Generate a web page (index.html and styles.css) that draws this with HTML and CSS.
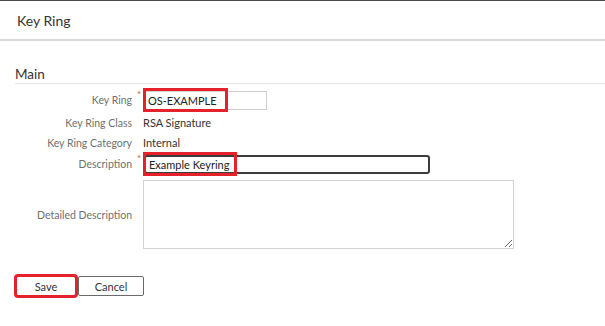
FILE: index.html
```html
<!DOCTYPE html>
<html lang="en">
<head>
    <meta charset="UTF-8">
    <title>Key Ring</title>
    <link rel="stylesheet" href="styles.css">
</head>
<body>
    <div class="page">
        <div class="page-header">
            <h1>Key Ring</h1>
        </div>
        <div class="section">
            <h2>Main</h2>
            <div class="form">
                <div class="row row-input">
                    <label>Key Ring</label>
                    <span class="req">*</span>
                    <div class="field">
                        <input class="txt txt-short" type="text" value="OS-EXAMPLE">
                        <span class="mark mark-keyring"></span>
                    </div>
                </div>
                <div class="row">
                    <label>Key Ring Class</label>
                    <span></span>
                    <div class="value">RSA Signature</div>
                </div>
                <div class="row row-small">
                    <label>Key Ring Category</label>
                    <span></span>
                    <div class="value">Internal</div>
                </div>
                <div class="row row-input">
                    <label>Description</label>
                    <span class="req">*</span>
                    <div class="field">
                        <input class="txt txt-long" type="text" value="Example Keyring">
                        <span class="mark mark-desc"></span>
                    </div>
                </div>
                <div class="row row-area">
                    <label>Detailed Description</label>
                    <span></span>
                    <div class="field">
                        <textarea class="area"></textarea>
                    </div>
                </div>
            </div>
        </div>
        <div class="actions">
            <button class="btn btn-save">Save</button>
            <button class="btn">Cancel</button>
        </div>
    </div>
</body>
</html>
```

FILE: styles.css
```css
* {
    margin: 0;
    padding: 0;
    box-sizing: border-box;
    font-family: Lato, "Open Sans", sans-serif;
}

body {
    background-color: #ffffff;
    color: #333333;
}

.page {
    width: 605px;
    height: 326px;
    border-top: 1px solid #4a4a4a;
}

.page-header {
    height: 40px;
    padding-left: 17px;
    display: flex;
    align-items: center;
    border-bottom: 2px solid #d9d9d9;
}

.page-header h1 {
    font-size: 14px;
    font-weight: normal;
    color: #333333;
}

.section {
    padding-left: 15px;
    padding-top: 25px;
}

.section h2 {
    font-size: 13.5px;
    font-weight: normal;
    color: #333333;
    padding-bottom: 1px;
    border-bottom: 1px solid #e6e6e6;
}

.form {
    padding-top: 4px;
    margin-left: -15px;
}

.row {
    display: grid;
    grid-template-columns: 132px 11px 1fr;
    align-items: center;
    height: 21px;
    font-size: 11px;
}

.row-small {
    height: 19px;
}

.row-input {
    height: 24px;
}

.row-area {
    height: auto;
    margin-top: 4px;
}

.row label {
    text-align: right;
    font-size: 10.5px;
    color: #707070;
}

.req {
    align-self: start;
    padding-left: 5px;
    padding-top: 1px;
    font-size: 10px;
    color: #c8553d;
    line-height: 10px;
}

.value {
    color: #333333;
}

.field {
    position: relative;
    display: flex;
    align-items: center;
    height: 100%;
}

.txt {
    height: 19px;
    padding: 0 3px;
    font-size: 11px;
    color: #222222;
    background: #ffffff;
    outline: none;
}

.txt-short {
    width: 123px;
    margin-left: 1px;
    border: 1px solid #cfcfcf;
}

.txt-long {
    width: 286px;
    margin-left: 1px;
    height: 19px;
    border: 2px solid #3c3c3c;
    border-radius: 3px;
}

.area {
    width: 371px;
    height: 69px;
    border: 1px solid #d2d2d2;
    resize: both;
}

/* red annotation boxes drawn over the fields */
.mark {
    position: absolute;
    left: 0;
    top: 0;
    height: 24px;
    border: 3px solid #e5222b;
    pointer-events: none;
}

.mark-keyring {
    width: 85px;
}

.mark-desc {
    width: 94px;
}

.actions {
    display: flex;
    gap: 2px;
    padding-left: 16px;
    margin-top: 27px;
}

.btn {
    height: 20px;
    width: 66px;
    font-size: 11px;
    color: #333333;
    background: #ffffff;
    border: 1px solid #6a6a6a;
    border-radius: 2px;
}

.btn-save {
    width: 60px;
    outline: 3px solid #e5222b;
    outline-offset: -1px;
}
```
